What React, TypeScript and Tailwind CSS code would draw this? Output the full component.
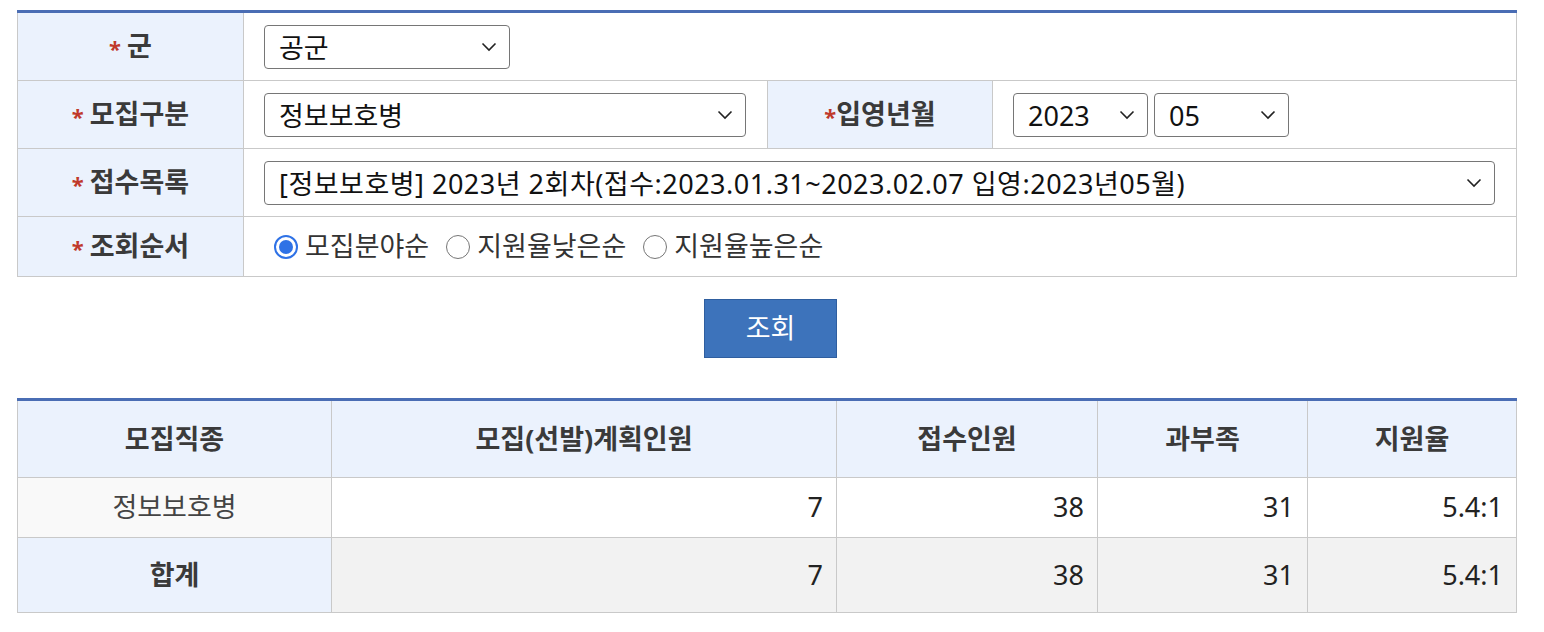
import React from "react";

const font = { fontFamily: '"Noto Sans", "Noto Sans CJK KR", sans-serif' };

const Chevron = () => (
  <svg width="16" height="10" viewBox="0 0 16 10" className="shrink-0">
    <path d="M1.5 1.5 L8 8 L14.5 1.5" fill="none" stroke="#222" strokeWidth="1.6" />
  </svg>
);

const Select = ({ value, className }: { value: string; className: string }) => (
  <div
    className={`flex items-center justify-between h-[44px] rounded-[4px] border border-[#767676] bg-white pl-[14px] pr-[12px] text-[27px] leading-none text-[#111] ${className}`}
  >
    <span className="whitespace-nowrap pt-[2px]">{value}</span>
    <Chevron />
  </div>
);

const Label = ({ text, tight }: { text: string; tight?: boolean }) => (
  <th className="bg-[#ebf2fd] border border-[#c9c9c9] text-center font-bold text-[27px] text-[#3a3a3a]">
    <span className="text-[#c0392b] text-[22px] align-middle">*</span>
    {!tight && <span className="inline-block w-[6px]" />}
    {text}
  </th>
);

const Radio = ({ label, checked }: { label: string; checked?: boolean }) => (
  <label className="flex items-center gap-[7px] mr-[17px]">
    {checked ? (
      <span className="w-[24px] h-[24px] rounded-full border-[2px] border-[#2f72e6] flex items-center justify-center">
        <span className="w-[14px] h-[14px] rounded-full bg-[#2f72e6]" />
      </span>
    ) : (
      <span className="w-[24px] h-[24px] rounded-full border border-[#767676] bg-white" />
    )}
    <span className="text-[27px] text-[#333]">{label}</span>
  </label>
);

const cols = ["모집직종", "모집(선발)계획인원", "접수인원", "과부족", "지원율"];

export default function App() {
  return (
    <div className="bg-white w-[1544px] h-[632px] pt-[10px]" style={font}>
      <table className="ml-[17px] w-[1499px] border-collapse table-fixed border-t-[3px] border-t-[#4a6db4]">
        <colgroup>
          <col className="w-[226px]" />
          <col className="w-[524px]" />
          <col className="w-[225px]" />
          <col className="w-[524px]" />
        </colgroup>
        <tbody>
          <tr className="h-[69px]">
            <Label text="군" />
            <td colSpan={3} className="border border-[#c9c9c9] px-[20px]">
              <Select value="공군" className="w-[246px]" />
            </td>
          </tr>
          <tr className="h-[68px]">
            <Label text="모집구분" />
            <td className="border border-[#c9c9c9] px-[20px]">
              <Select value="정보보호병" className="w-[482px]" />
            </td>
            <Label text="입영년월" tight />
            <td className="border border-[#c9c9c9] px-[20px]">
              <div className="flex gap-[6px]">
                <Select value="2023" className="w-[135px]" />
                <Select value="05" className="w-[135px]" />
              </div>
            </td>
          </tr>
          <tr className="h-[68px]">
            <Label text="접수목록" />
            <td colSpan={3} className="border border-[#c9c9c9] px-[20px]">
              <Select
                value="[정보보호병] 2023년 2회차(접수:2023.01.31~2023.02.07 입영:2023년05월)"
                className="w-[1231px] tracking-[0.5px]"
              />
            </td>
          </tr>
          <tr className="h-[60px]">
            <Label text="조회순서" />
            <td colSpan={3} className="border border-[#c9c9c9] px-[30px]">
              <div className="flex items-center">
                <Radio label="모집분야순" checked />
                <Radio label="지원율낮은순" />
                <Radio label="지원율높은순" />
              </div>
            </td>
          </tr>
        </tbody>
      </table>

      <div className="flex justify-center mt-[22px] mb-[40px] pr-[3px]">
        <button className="w-[133px] h-[59px] bg-[#3d73bb] border border-[#2f5e9f] text-white text-[27px]">
          조회
        </button>
      </div>

      <table className="ml-[17px] w-[1499px] border-collapse table-fixed border-t-[3px] border-t-[#4a6db4]">
        <colgroup>
          <col className="w-[314px]" />
          <col className="w-[505px]" />
          <col className="w-[261px]" />
          <col className="w-[210px]" />
          <col className="w-[209px]" />
        </colgroup>
        <thead>
          <tr className="h-[78px]">
            {cols.map((c) => (
              <th key={c} className="bg-[#ebf2fd] border border-[#c9c9c9] text-center font-bold text-[27px] text-[#3a3a3a]">
                {c}
              </th>
            ))}
          </tr>
        </thead>
        <tbody>
          <tr className="h-[60px]">
            <td className="bg-[#f9f9f9] border border-[#c9c9c9] text-center text-[27px] text-[#444]">정보보호병</td>
            {["7", "38", "31", "5.4:1"].map((v, i) => (
              <td key={i} className="border border-[#c9c9c9] text-right pr-[13px] text-[27px] text-[#222]">
                {v}
              </td>
            ))}
          </tr>
          <tr className="h-[75px]">
            <th className="bg-[#ebf2fd] border border-[#c9c9c9] text-center font-bold text-[27px] text-[#3a3a3a]">합계</th>
            {["7", "38", "31", "5.4:1"].map((v, i) => (
              <td key={i} className="bg-[#f2f2f2] border border-[#c9c9c9] text-right pr-[13px] text-[27px] text-[#222]">
                {v}
              </td>
            ))}
          </tr>
        </tbody>
      </table>
    </div>
  );
}
